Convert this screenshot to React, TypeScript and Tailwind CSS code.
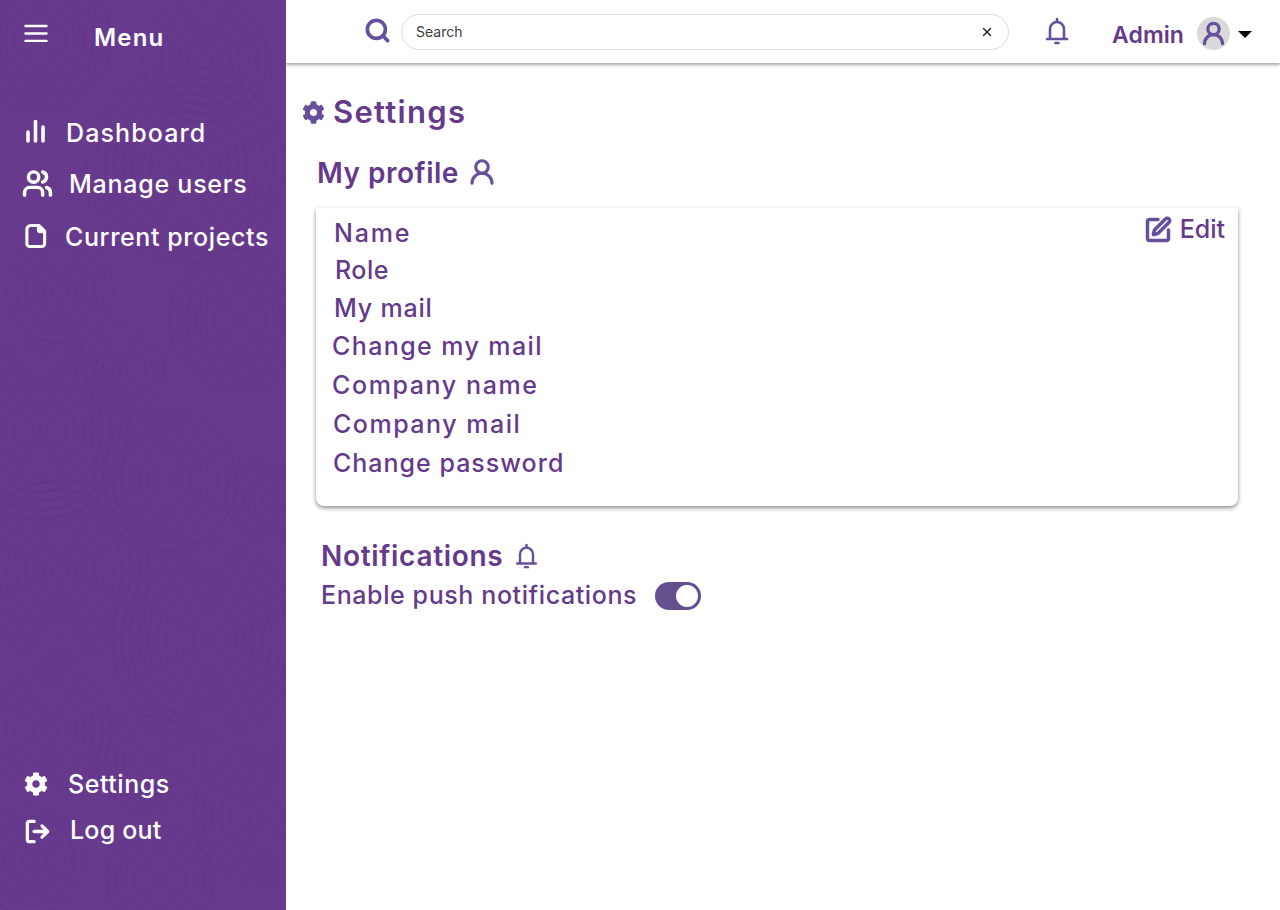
import React from "react";
import { LogOut, Search, SquarePen, UserRound, Users, X } from "lucide-react";
import { FaCog } from "react-icons/fa";

const font = "font-['Inter','Liberation_Sans',sans-serif]";

// sidebar background texture: clusters of rings
const clusters = [
  [40, 40, 80], [205, 60, 70], [185, 165, 100], [60, 290, 60], [240, 320, 80], [40, 430, 90],
  [165, 480, 80], [60, 570, 90], [210, 640, 100], [50, 730, 70], [150, 760, 55], [265, 815, 80],
  [30, 860, 60], [160, 880, 60], [120, 370, 50], [270, 500, 50],
];

const Texture = () => (
  <svg className="absolute inset-0 h-full w-full" viewBox="0 0 286 910" fill="none" aria-hidden="true">
    {clusters.map(([cx, cy, r]) => {
      const rings = [];
      for (let i = 8; i < r; i += 9) {
        rings.push(<circle key={i} cx={cx} cy={cy} r={i} stroke="#5f3485" strokeOpacity="0.3" strokeWidth="2.5" />);
      }
      return <g key={`${cx}-${cy}`}>{rings}</g>;
    })}
  </svg>
);

const BellIcon = ({ className }: { className: string }) => (
  <svg viewBox="0 0 24 28" fill="none" stroke="currentColor" strokeLinecap="round" strokeWidth="2.6" className={className}>
    <path d="M12 2v2.5" />
    <path d="M5 21.5V12a7 7 0 0 1 14 0v9.5" />
    <path d="M2 22h20" />
    <path d="M10.5 26h3" />
  </svg>
);

const profileRows = [
  { label: "Name", className: "ml-[18px] h-[37px] tracking-[1.8px]" },
  { label: "Role", className: "ml-[19px] h-[38px] tracking-[0.5px]" },
  { label: "My mail", className: "ml-[18px] h-[38px] tracking-[0.8px]" },
  { label: "Change my mail", className: "ml-[16px] h-[38px] tracking-[1.4px]" },
  { label: "Company name", className: "ml-[16px] h-[39px] tracking-[1.6px]" },
  { label: "Company mail", className: "ml-[17px] h-[39px] tracking-[1.5px]" },
  { label: "Change password", className: "ml-[17px] h-[39px] tracking-[1px]" },
];

export default function App() {
  return (
    <div className={`flex h-[910px] w-[1280px] overflow-hidden bg-white ${font}`}>
      <aside className="relative flex w-[286px] shrink-0 flex-col justify-between bg-[#673a8d] text-white">
        <Texture />
        <div className="relative">
          <div className="flex h-[76px] items-center pl-[24px]">
            <svg viewBox="0 0 24 18" width="24" height="18" fill="none" stroke="currentColor" strokeWidth="2.4" strokeLinecap="round" className="-mt-[10px]">
              <path d="M1.5 2h21M1.5 9.500h21M1.500 17h21" />
            </svg>
            <span className="ml-[46px] text-[24px] font-semibold tracking-[1.2px]">Menu</span>
          </div>
          <nav className="mt-[32px] flex flex-col text-[25px] font-medium">
            <div className="flex h-[51px] items-center pl-[25px]">
              <svg viewBox="0 0 22 24" width="22" height="24" fill="none" stroke="currentColor" strokeWidth="3.6" strokeLinecap="round" className="-mt-[5px]">
                <path d="M3 22v-9M10.500 22V2.500M18 22V8" />
              </svg>
              <span className="ml-[19px] tracking-[1.1px]">Dashboard</span>
            </div>
            <div className="flex h-[52px] items-center pl-[22px]">
              <Users size={31} strokeWidth={2.7} className="-mt-[3px]" />
              <span className="ml-[16px] tracking-[0.75px]">Manage users</span>
            </div>
            <div className="mt-px flex h-[52px] items-center pl-[24px]">
              <svg viewBox="0 0 24 27" width="23" height="26" fill="none" stroke="currentColor" strokeWidth="3.2" strokeLinejoin="round" className="-mt-[5px]">
                <path d="M7 2.500h8.500L21.500 8.500V21.500a3 3 0 0 1-3 3H6a3 3 0 0 1-3-3V6.500a4 4 0 0 1 4-4z" />
                <path d="M14 2.500v5.500a2 2 0 0 0 2 2h5.500z" fill="currentColor" strokeWidth="1" />
              </svg>
              <span className="ml-[18px] tracking-[0.6px]">Current projects</span>
            </div>
          </nav>
        </div>
        <div className="relative mb-[56px] flex flex-col text-[25px] font-medium">
          <div className="flex h-[47px] items-center pl-[24px]">
            <FaCog size={24} className="-mt-[2px]" />
            <span className="ml-[20px] tracking-[0.55px]">Settings</span>
          </div>
          <div className="flex h-[46px] items-center pl-[24px]">
            <LogOut size={27} strokeWidth={2.9} className="-scale-x-100 rotate-180" />
            <span className="ml-[19px] tracking-[0.2px]">Log out</span>
          </div>
        </div>
      </aside>

      <div className="flex min-w-0 flex-1 flex-col text-[#653a8b]">
        <header className="flex h-[63px] items-center shadow-[0_2px_3px_rgba(0,0,0,0.35)]">
          <Search size={27} strokeWidth={3.3} className="ml-[78px] -mt-[2px] text-[#67509b]" />
          <div className="ml-[10px] flex h-[36px] w-[608px] items-center justify-between rounded-full border border-[#dcdcdc] pl-[14px] pr-[14px] text-[14px] text-[#3c3c3c]">
            <span>Search</span>
            <X size={14} strokeWidth={2.4} className="text-[#222]" />
          </div>
          <BellIcon className="ml-[36px] -mt-[1px] h-[28px] w-[24px] text-[#67509b]" />
          <span className="ml-[43px] mt-[7px] text-[23px] font-semibold tracking-[0.1px]">Admin</span>
          <div className="ml-[13px] mt-[4px] flex h-[33px] w-[33px] items-center justify-center rounded-full bg-[#d9d9d9]">
            <UserRound size={27} strokeWidth={2.9} className="text-[#67509b]" />
          </div>
          <div className="ml-[8px] mt-[5px] h-0 w-0 border-x-[7px] border-t-[7px] border-x-transparent border-t-black" />
        </header>

        <main className="flex flex-col">
          <div className="mt-[27px] flex h-[44px] items-center pl-[16px]">
            <FaCog size={23} className="text-[#67509b]" />
            <h1 className="ml-[8px] text-[31px] font-semibold tracking-[1.3px]">Settings</h1>
          </div>

          <div className="mt-[22px] flex h-[34px] items-center pl-[31px]">
            <h2 className="text-[28px] font-semibold tracking-[0.5px]">My profile</h2>
            <UserRound size={30} strokeWidth={2.5} className="ml-[8px] -mt-[2px] text-[#67509b]" />
          </div>

          <section className="relative mt-[18px] ml-[30px] h-[298px] w-[922px] rounded-b-[8px] pt-[7px] text-[25px] font-medium shadow-[0_2px_4px_rgba(0,0,0,0.45)]">
            {profileRows.map((row) => (
              <div key={row.label} className={`flex items-center ${row.className}`}>
                {row.label}
              </div>
            ))}
            <div className="absolute right-[13px] top-[3px] flex items-center gap-[8px] text-[25px]">
              <SquarePen size={28} strokeWidth={3} className="text-[#67509b]" />
              <span>Edit</span>
            </div>
          </section>

          <div className="mt-[32px] flex h-[36px] items-center pl-[35px]">
            <h2 className="text-[28px] font-semibold tracking-[0.7px]">Notifications</h2>
            <BellIcon className="ml-[12px] h-[26px] w-[23px] text-[#67509b]" />
          </div>
          <div className="mt-[4px] flex h-[36px] items-center pl-[35px] text-[25px] font-medium">
            <span className="tracking-[0.6px]">Enable push notifications</span>
            <div className="ml-[18px] flex h-[28px] w-[46px] items-center justify-end rounded-full bg-[#64508f] pr-[3px]">
              <div className="h-[22px] w-[22px] rounded-full bg-white" />
            </div>
          </div>
        </main>
      </div>
    </div>
  );
}
